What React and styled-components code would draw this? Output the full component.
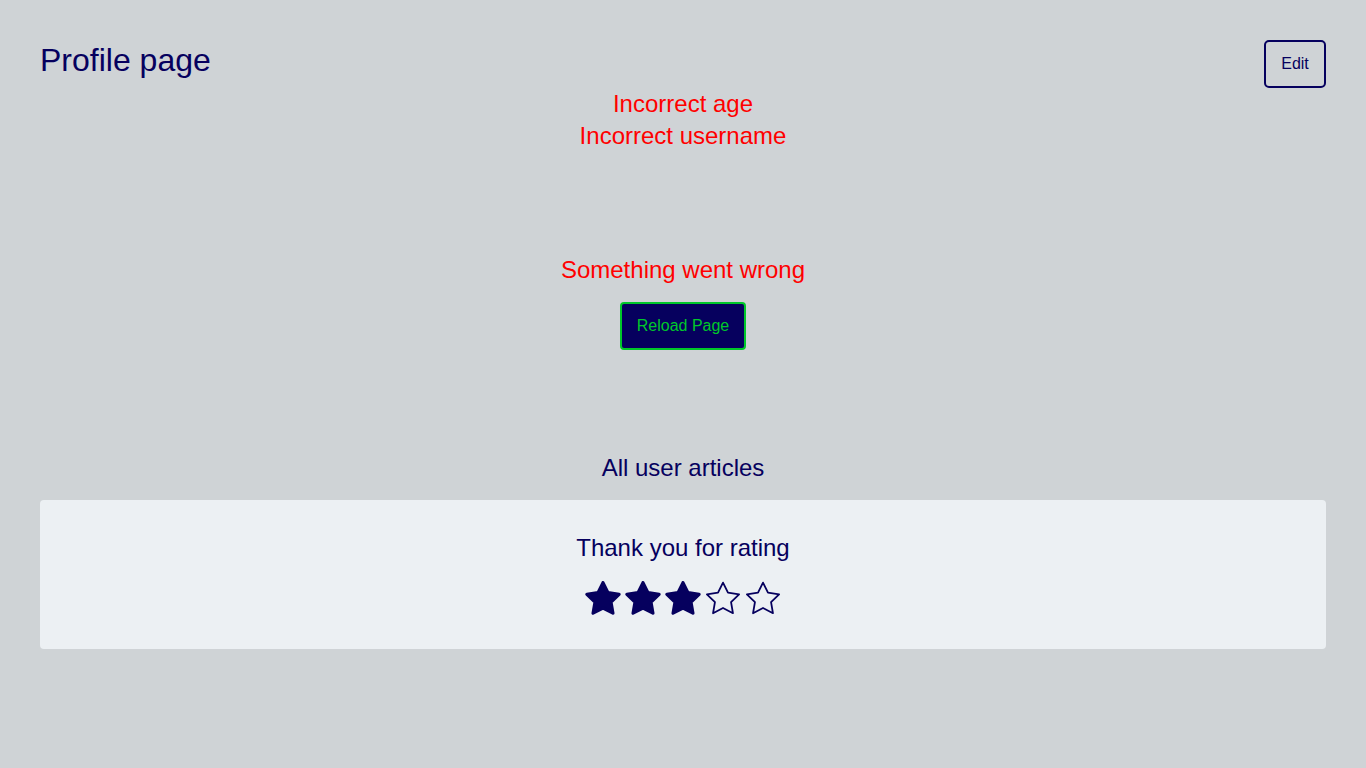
import React from 'react';
import styled, { createGlobalStyle } from 'styled-components';

const GlobalStyle = createGlobalStyle`
  body {
    margin: 0;
    background: #cfd3d6;
    font-family: "Liberation Sans", Arial, sans-serif;
    color: #06005e;
  }
`;

const STAR =
  'M18 3 L22.7 12.5 L33.2 14.1 L25.6 21.5 L27.4 31.9 L18 27 L8.6 31.9 L10.4 21.5 L2.8 14.1 L13.3 12.5 Z';

const Star = ({ filled }) => (
  <StarIcon viewBox="1 1.5 34 34" width="36" height="36">
    <path
      d={STAR}
      fill={filled ? '#06005e' : 'none'}
      stroke="#06005e"
      strokeWidth={filled ? 3 : 1.7}
      strokeLinejoin="round"
    />
  </StarIcon>
);

const App = () => (
  <>
    <GlobalStyle />
    <Page>
      <Header>
        <Title>Profile page</Title>
        <OutlineButton>Edit</OutlineButton>
      </Header>
      <Errors>
        <ErrorText>Incorrect age</ErrorText>
        <ErrorText>Incorrect username</ErrorText>
      </Errors>
      <Fallback>
        <ErrorText>Something went wrong</ErrorText>
        <ReloadButton>Reload Page</ReloadButton>
      </Fallback>
      <Articles>
        <SectionTitle>All user articles</SectionTitle>
        <Card>
          <SectionTitle>Thank you for rating</SectionTitle>
          <Stars>
            {[1, 2, 3, 4, 5].map((n) => (
              <Star key={n} filled={n <= 3} />
            ))}
          </Stars>
        </Card>
      </Articles>
    </Page>
  </>
);

const Page = styled.div`
  padding: 40px;
  min-height: 768px;
  box-sizing: border-box;
`;

const Header = styled.header`
  display: flex;
  justify-content: space-between;
  align-items: flex-start;
`;

const Title = styled.h1`
  margin: 0;
  font-size: 32px;
  line-height: 40px;
  font-weight: 400;
`;

const OutlineButton = styled.button`
  width: 62px;
  height: 48px;
  border: 2px solid #06005e;
  border-radius: 5px;
  background: transparent;
  color: #06005e;
  font-family: inherit;
  font-size: 16px;
  padding: 0;
`;

const Errors = styled.div`
  display: flex;
  flex-direction: column;
  align-items: center;
`;

const ErrorText = styled.p`
  margin: 0;
  font-size: 24px;
  line-height: 32px;
  color: #ff0000;
`;

const Fallback = styled.div`
  margin-top: 102px;
  display: flex;
  flex-direction: column;
  align-items: center;
  gap: 16px;
`;

const ReloadButton = styled.button`
  width: 126px;
  height: 48px;
  background: #06005e;
  border: 2px solid #00c82a;
  border-radius: 4px;
  color: #00c82a;
  font-family: inherit;
  font-size: 16px;
  padding: 0;
`;

const Articles = styled.section`
  margin-top: 102px;
  display: flex;
  flex-direction: column;
  align-items: center;
  gap: 16px;
`;

const SectionTitle = styled.h2`
  margin: 0;
  font-size: 24px;
  line-height: 32px;
  font-weight: 400;
`;

const Card = styled.div`
  align-self: stretch;
  background: #ecf0f3;
  border-radius: 4px;
  padding: 32px;
  display: flex;
  flex-direction: column;
  align-items: center;
  gap: 16px;
`;

const Stars = styled.div`
  display: flex;
  gap: 4px;
  height: 37px;
  align-items: center;
`;

const StarIcon = styled.svg`
  display: block;
`;

export default App;
